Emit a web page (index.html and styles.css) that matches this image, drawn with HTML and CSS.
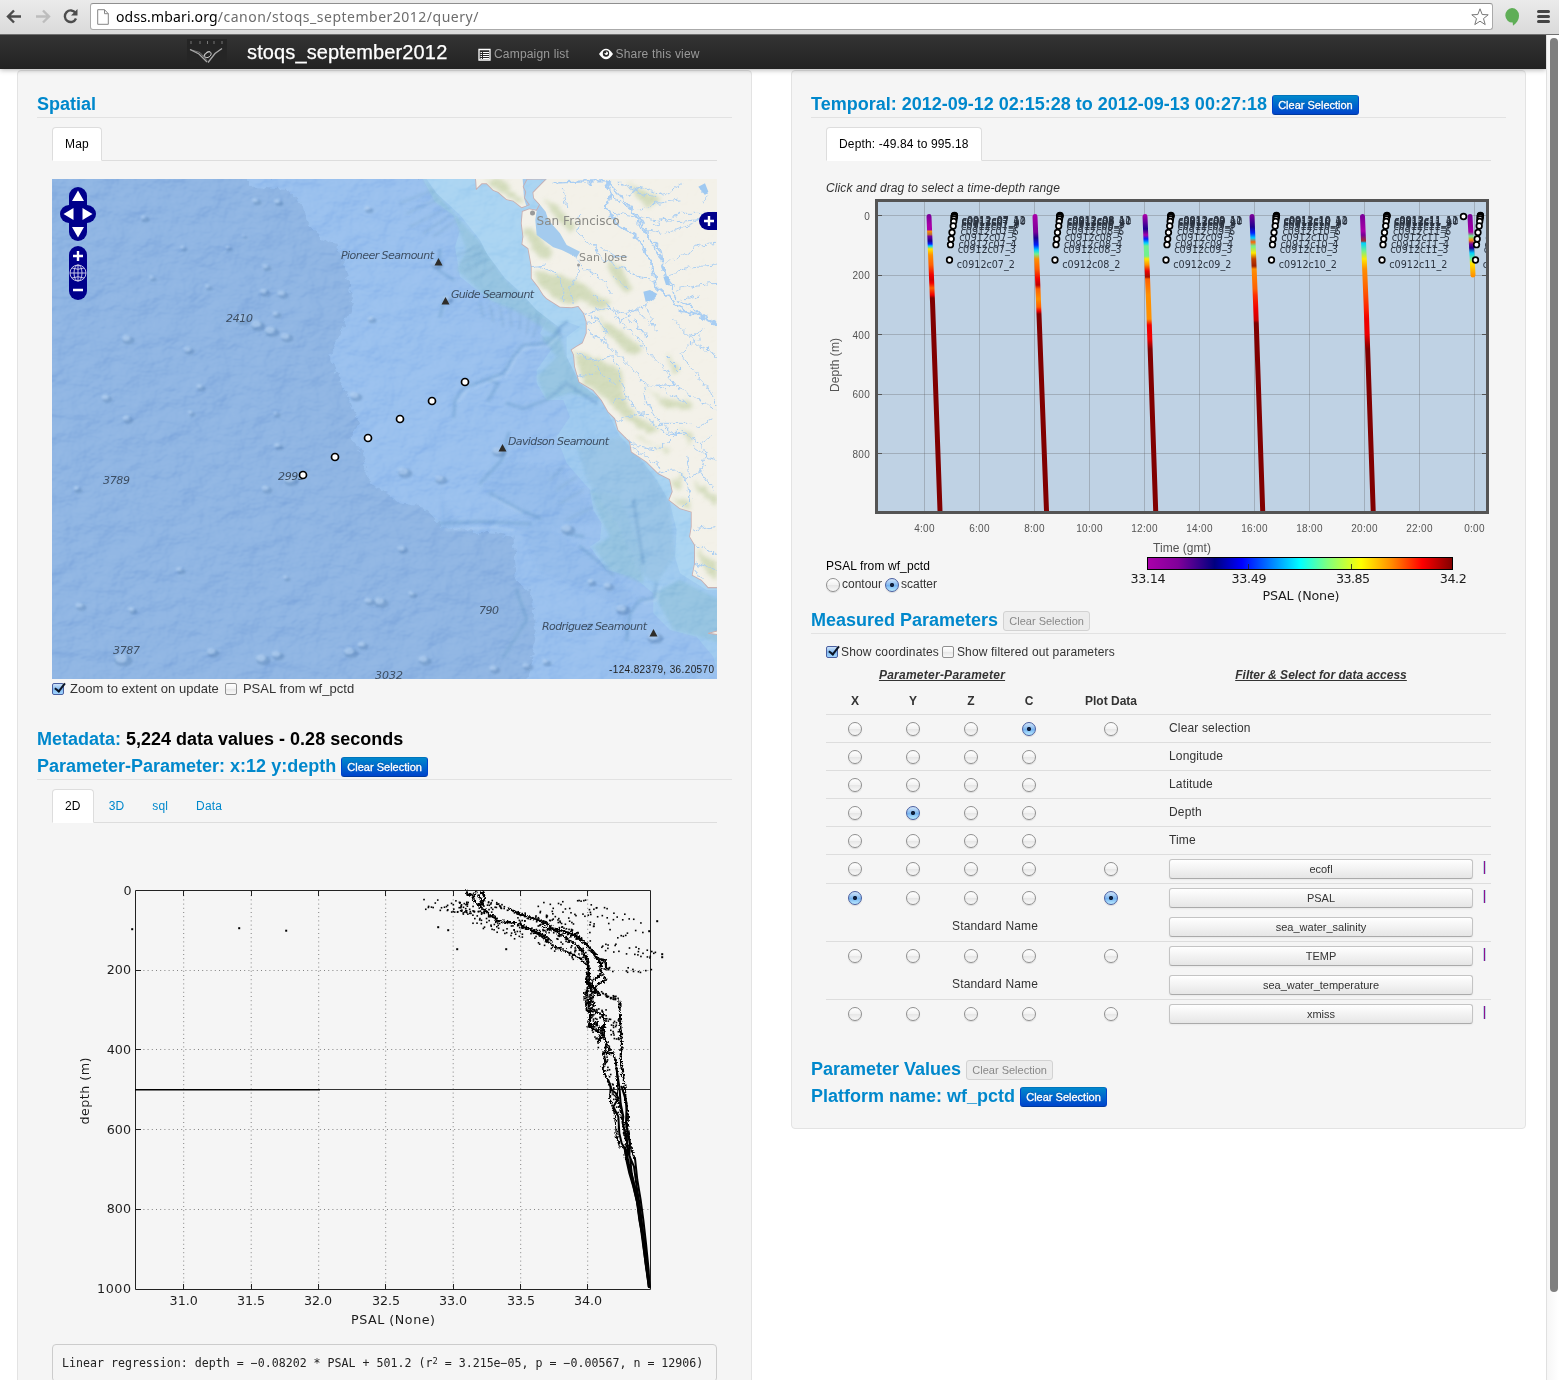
FILE: index.html
```html
<!DOCTYPE html>
<html lang="en">
<head>
<meta charset="utf-8">
<title>stoqs_september2012</title>
<link rel="stylesheet" href="styles.css">
</head>
<body>
<header class="chrome">
  <svg class="chrome-nav" width="90" height="34" viewBox="0 0 90 34">
    <g fill="none" stroke="#4c4c4c" stroke-width="2.4"><path d="M21 16.5H8.5M14 10.5l-6 6 6 6"/><path stroke="#bdbdbd" d="M36 16.5h12.500M43 10.500l6 6-6 6"/><path d="M75.500 13A5.800 5.800 0 1 0 76 18.500"/></g>
    <path fill="#4c4c4c" d="M77.500 9v6.500H71z"/>
  </svg>
  <div class="omnibox">
    <svg width="12" height="16" viewBox="0 0 12 16"><path d="M.7.7h6.800l3.800 4v10.600H.7z" fill="#fff" stroke="#858585"/><path d="M7.500.7v4h3.800" fill="none" stroke="#858585"/></svg>
    <div class="url"><b>odss.mbari.org</b><span>/canon/stoqs_september2012/query/</span></div>
    <svg class="star" width="20" height="20" viewBox="0 0 20 20"><path d="M10 1.800l2.200 5.700 6 .3-4.700 3.800 1.700 6L10 14.200l-5.200 3.400 1.700-6L1.800 7.800l6-.3z" fill="#fff" stroke="#777" stroke-linejoin="round"/></svg>
  </div>
  <svg class="chrome-ext" width="64" height="34" viewBox="0 0 64 34"><path fill="#5fae57" d="M19 8a7 7.500 0 0 1 7 7.500c0 5-3 8-6 10.200l-.3-3.200A7 7.200 0 0 1 19 8z"/><path stroke="#444" stroke-width="3" stroke-linecap="round" d="M45.500 11.500h10M45.500 16.500h10M45.500 21.500h10"/></svg>
</header>
<div class="viewport">
<div class="page">
  <nav class="navbar">
    <svg class="logo" width="40" height="25" viewBox="0 0 40 25"><rect width="40" height="25" fill="#252525"/><g fill="none" stroke="#a9a9a9"><path d="M4 2v3M13 2v3M20.500 2v3M27 2v3M35 2v3" stroke="#777"/><path d="M3 10.500l9 4.500 8 8M35 9.500l-7 5-7 9" stroke-width="1.300"/><path d="M3 10.500l10 3 7 8" stroke-width=".6"/><path d="M17 17c1-4 6-6 7-3s-4 6-6 4 3-6 5-5" stroke="#ccc"/></g></svg>
    <a class="brand">stoqs_september2012</a>
    <a class="navlink"><svg width="13" height="13" viewBox="0 0 13 13"><path d="M1 1.500h11v10.500H1z" fill="none" stroke="#fff" stroke-width="1.300"/><path d="M2.500 4.500h1.500M2.500 6.500h1.500M2.500 8.500h1.500M2.500 10.500h1.500M5 4.500h6M5 6.500h6M5 8.500h6M5 10.500h6" stroke="#fff"/></svg>Campaign list</a>
    <a class="navlink share"><svg width="14" height="12" viewBox="0 0 14 12"><path d="M0 6q7-10.500 14 0-7 10.500-14 0z" fill="#fff"/><circle cx="7" cy="5.500" r="3.200" fill="#292929"/><circle cx="7.300" cy="5.300" r="1.700" fill="#fff"/><circle cx="6.300" cy="4.300" r="1" fill="#292929"/></svg>Share this view</a>
  </nav>
  <main class="columns">
    <section class="well">
      <h3 class="first ruled">Spatial</h3>
      <div class="tabs"><a class="on">Map</a></div>
      <div class="body">
        <svg class="map" id="map" width="665" height="500" viewBox="0 0 665 500">
          <defs>
            <filter id="relief" x="0" y="0" width="1" height="1" color-interpolation-filters="sRGB"><feTurbulence type="fractalNoise" baseFrequency=".03 .04" numOctaves="4" seed="11"/><feDiffuseLighting surfaceScale="5" diffuseConstant=".6" lighting-color="#fff"><feDistantLight azimuth="225" elevation="58"/></feDiffuseLighting></filter>
            <filter id="ragged" x="-.1" y="-.1" width="1.2" height="1.2"><feTurbulence type="fractalNoise" baseFrequency=".05" numOctaves="3" seed="4"/><feDisplacementMap in="SourceGraphic" scale="26" xChannelSelector="R" yChannelSelector="G"/></filter>
            <filter id="soft"><feGaussianBlur stdDeviation="4"/></filter>
            <filter id="softer"><feTurbulence type="fractalNoise" baseFrequency=".06" numOctaves="3" seed="9"/><feDisplacementMap in="SourceGraphic" scale="26" xChannelSelector="R" yChannelSelector="G"/><feGaussianBlur stdDeviation="6"/></filter>
            <clipPath id="coast"><path id="coastline" d="M288 27L290 55 305 40 320 40 340 60 355 66 380 88 400 92 425 112 446 104 432 84 436 66 428 50 440 27 500 27 460 68 462 84 480 104 470 122 448 118 428 125 425 160 430 200 427 222 445 235 450 262 455 290 455 325 475 350 490 374 500 385 540 410 575 412 595 408 612 430 620 455 620 490 608 520 590 530 575 540 582 555 585 590 598 635 640 660 665 690 685 725 705 745 715 780 750 815 755 845 800 875 835 910 870 928 878 965 868 990 900 1015 935 1025 935 1070 930 1100 945 1125 945 1180 938 1215 965 1230 985 1252 1020 1252 1020 20z"/></clipPath>
          </defs>
          <rect width="665" height="500" fill="#8fb5e3"/>
          <g transform="translate(328 -9) scale(.33333)">
            <path fill="#99c0ee" filter="url(#ragged)" d="M-410 20L-380 50-280 60-230 110-220 150-185 200-130 220-105 290-80 400-150 560-110 650-60 760-90 800-50 850-35 940 20 965 60 1000 130 1010 190 1070 400 1100 410 1230 450 1270 470 1380 440 1560 1040 1560 1040 20z"/>
            <path fill="#8fb8e9" filter="url(#soft)" d="M180 970L260 1090 450 1050 300 960 380 870 550 900 630 1000 660 1060 520 1080 640 1160 760 1270 740 1400 700 1300 480 1210 420 1080 180 1080z" opacity=".45"/>
            <path fill="#9fcaef" d="M125 20L165 95 220 135 240 180 225 230 240 320 330 390 420 420 500 450 480 490 520 530 470 600 470 640 500 690 550 690 570 740 530 800 560 880 630 960 640 1020 665 1060 660 1110 630 1130 680 1200 760 1220 820 1270 820 1330 870 1380 950 1400 1000 1460 1020 1540 1020 20z"/>
            <path fill="#93c2dd" opacity=".75" filter="url(#soft)" d="M125 20L165 95 220 135 260 240 230 300 330 390 420 430 530 500 480 500 530 560 470 620 500 690 570 670 670 690 600 640 560 560 530 470 420 370 370 320 300 215 230 140 170 70z M630 960L650 1020 690 1100 640 1130 690 1200 790 1240 790 1160 720 980z M820 1270L900 1230 1020 1290 1020 1420 960 1400 880 1380z"/>
            <path fill="#aad4f2" d="M135 20L170 70 240 135 300 210 320 250 375 325 420 365 470 420 535 470 560 455 600 470 560 500 560 560 600 640 665 690 720 800 760 840 830 930 870 1000 890 1080 885 1160 900 1210 980 1260 1020 1260 1020 20z"/>
            <path fill="#97c3e4" opacity=".75" filter="url(#soft)" d="M590 830L720 800 760 840 830 930 870 1000 885 1160 830 1240 780 1210 710 1060 620 930z"/>
            <g fill="none" stroke-linejoin="round" stroke-linecap="round">
              <path stroke="#6d9fcd" stroke-width="8" opacity=".55" filter="url(#soft)" d="M540 480L500 520 430 525 400 560 370 610 330 625 250 655 225 690 222 740M325 630L355 640 325 690M560 455L530 480 545 500M650 700L560 640 500 690 430 715 380 700M385 790L365 870 300 940M330 970L420 1020 480 1045M180 1060L300 1055 450 1060M600 1130L650 1170 700 1215M830 1240L820 1285 780 1290 750 1330 740 1410M410 1260L440 1350 370 1460M560 1090L610 1100M180 240L175 300 220 330M195 380L180 440M760 990L790 1180"/>
              <path stroke="#6f9ec4" stroke-width="4" opacity=".5" filter="url(#soft)" d="M300 400L310 440M330 405L340 455M360 410L370 470M390 420L395 470M420 425L420 480M450 430L440 490M480 435L460 500M230 255L300 230M240 280L310 245M250 305L320 270M280 330L345 290M160 60L60 100M170 90L80 130M190 120L90 170M210 135L130 190M230 150L160 200M550 890L510 930M590 920L530 960M610 960L540 1000M640 1010L560 1050"/>
              <path stroke="#c7e1fa" stroke-width="4" opacity=".6" filter="url(#soft)" d="M548 490L505 530 435 535 408 565 378 618 335 633 258 662 233 700M338 984L425 1030M195 1080L350 1072 400 1082M840 1250L830 1290 790 1300"/>
            </g>
          </g>
          <g id="bumps"></g>
          <rect class="shade" width="665" height="500" filter="url(#relief)"/>
          <g transform="translate(328 -9) scale(.33333)">
            <use href="#coastline" fill="none" stroke="#c8aeb0" stroke-width="5"/>
            <g clip-path="url(#coast)">
              <rect x="200" y="0" width="820" height="1300" fill="#f3f1e9"/>
              <g fill="#c9d5ad" filter="url(#softer)" opacity=".75">
                <path d="M310 30L350 60 430 105 430 90 390 60 380 30zM430 180L455 175 520 250 500 270 460 240zM465 305L540 315 600 335 690 400 670 420 600 390 560 405 520 380 480 345zM680 270L720 290 755 350 740 370 700 330zM490 80L540 120 590 170 570 190 520 130zM580 545L640 560 720 600 725 650 740 700 770 740 840 780 800 790 720 730 660 670 610 640zM650 440L720 480 790 540 760 560 690 500zM790 650L860 690 940 700 930 720 860 710z"/>
                <path d="M760 790L830 830 870 840 860 850 780 810zM880 930L910 910 900 960 880 950zM880 980L930 990 930 1020 900 1010zM940 930L1010 980 1010 1010 950 960zM950 1140L1011 1180 1011 1240 970 1190zM740 40L790 60 850 90 800 110zM860 550L900 600 880 610zM900 770L940 800 930 820z"/>
              </g>
              <rect class="shade land" x="200" y="0" width="820" height="1300" filter="url(#relief)"/>
              <path fill="#a4cbee" d="M428 27L500 27 456 68 460 84 480 104 497 125 505 150 540 190 560 225 600 245 590 262 545 240 520 232 470 195 466 150 470 122 440 112 432 84z"/>
              <g fill="none" stroke="#a9cef3" stroke-width="3" stroke-linejoin="round" stroke-linecap="round" filter="url(#ragged)">
                <path stroke-width="6.500" d="M520 38L620 34 680 34 690 70 680 110 710 160 740 180 780 210 800 250 820 300 830 350 870 385 910 425 960 435 1011 465"/>
                <path stroke-width="4.500" d="M690 70L740 110 770 130 820 220 850 290 865 340 890 385 920 405 1011 460M680 34L715 70 760 125 790 180 840 240 850 310M800 365L830 375 810 395M860 320L880 350"/>
                <path d="M700 130L790 145 890 155 950 150 1011 140M820 165L900 130 1011 130M800 180L860 190 960 150M850 280L920 250 960 225 1011 220M870 310L940 290 1011 285M890 360L950 345 1011 340M740 75L790 50 850 75 905 40M780 120L830 100 900 90M960 50L980 80 970 100M720 40L780 70 830 80M900 390L960 375M740 300L780 320 830 340M830 375L790 410 740 430 700 420M700 320L740 350M590 180L640 230 670 270 740 300M570 245L620 300 680 340 695 370M600 285L590 320 570 360 580 400M480 290L530 310 550 350 545 400M455 290L500 285M660 230L700 260 740 260M550 60L560 110M600 130L590 180 650 240"/>
                <path d="M620 460L660 455 680 480 670 510 640 500 625 480M660 455L620 430 690 410 640 370M670 510L700 540 760 600 790 640M690 410L720 460 760 490 800 540 850 590 880 640 920 670 1011 720M720 460L770 420 830 480M800 400L820 470M585 550L640 570 660 610 700 640M590 620L640 610M700 565L740 680 700 700M640 570L700 560M740 430L800 500M790 640L840 650 900 690 920 700M790 640L800 700 840 760 890 800M690 760L740 740 800 730M740 680L790 740 860 790 920 790M840 760L930 760M940 600L980 650 1011 700M960 500L900 550 940 600M930 500L970 480M880 450L960 530 1011 560M950 770L990 750M880 640L830 650M860 560L900 600"/>
                <path d="M720 790L770 830 830 840 870 810 900 780M750 830L800 860 840 890M835 910L880 900 920 930 960 900 980 860 940 830M920 930L930 990 910 1010M920 860L930 920M980 860L1011 870M960 900L1000 960M940 1080L1011 1070M945 1125L990 1140 1011 1160M940 1180L1011 1200M945 1200L980 1250M990 800L960 820 980 860M905 780L960 820"/>
              </g>
              <g fill="#9fc9f1"><path d="M790 365l20 -5 22 12-15 18-20 5zM955 50l20 -10 10 25-10 10zM850 320l15 0 5 25-12 0z"/></g>
            </g>
            <path d="M985 1390l30-8v12z" fill="#f3f1e9" stroke="#c8aeb0" stroke-width="3"/>
          </g>
          <circle cx="480.500" cy="34" r="2.500" fill="#999"/><circle cx="526.500" cy="86" r="1.500" fill="#999"/>
          <g class="places">
            <text x="484.500" y="45.500" textLength="83" font-size="12">San Francisco</text>
            <text x="527" y="82" textLength="48" font-size="11">San Jose</text>
          </g>
          <g class="depths">
            <text x="289" y="80" textLength="93">Pioneer Seamount</text><text x="399" y="119" textLength="83">Guide Seamount</text>
            <text x="456" y="266" textLength="101">Davidson Seamount</text><text x="490" y="451" textLength="105">Rodriguez Seamount</text>
            <text x="174" y="143" textLength="27">2410</text><text x="51" y="305" textLength="27">3789</text><text x="226" y="301" textLength="27">2993</text>
            <text x="61" y="475" textLength="27">3787</text><text x="427" y="435" textLength="20">790</text><text x="323" y="500" textLength="28">3032</text>
          </g>
          <path fill="#2e2c28" d="M386.500 79l4 7.500h-8zM393.500 118l4 7.500h-8zM450.500 265l4 7.500h-8zM601.500 450l4 7.500h-8z"/>
          <g class="stations"><circle cx="413" cy="203" r="3.500"/><circle cx="380" cy="222" r="3.500"/><circle cx="348" cy="240" r="3.500"/><circle cx="316" cy="259" r="3.500"/><circle cx="283" cy="278" r="3.500"/><circle cx="251" cy="296" r="3.500"/></g>
          <g fill="#00008b"><rect x="17" y="8" width="18" height="54" rx="9"/><rect x="8" y="26" width="36" height="18" rx="9"/><rect x="17" y="67" width="18" height="54" rx="9"/><path d="M665 33h-9a9 9 0 0 0 0 18h9z"/></g>
          <path fill="#fff" d="M26 11.500l6 10.500H20zM26 58.500l6-10.500H20zM11.500 35l10-6v12zM40.500 35l-10-6v12z"/>
          <path stroke="#fff" stroke-width="2.400" d="M21 77h10M26 72v10M21 111h10M652 42h10M657 37v10"/>
          <g fill="none" stroke="#d6d6ee" stroke-width=".9"><circle cx="26" cy="94" r="8"/><ellipse cx="26" cy="94" rx="4" ry="8"/><path d="M26 86v16M18 94h16M20 89q6 2.500 12 0M20 99q6-2.500 12 0"/></g>
          <text class="coords" x="557" y="494" textLength="105">-124.82379, 36.20570</text>
        </svg>
        <div class="checks"><input type="checkbox" checked><span>Zoom to extent on update</span><input type="checkbox" class="gap"><span>PSAL from wf_pctd</span></div>
      </div>
      <h3 class="meta">Metadata:&nbsp;<em>5,224 data values - 0.28 seconds</em></h3>
      <h3 class="ruled">Parameter-Parameter: x:12 y:depth<button class="mini blue">Clear Selection</button></h3>
      <div class="tabs"><a class="on">2D</a><a>3D</a><a>sql</a><a>Data</a></div>
      <div class="body">
        <svg class="plot" width="665" height="521" viewBox="0 0 665 521">
          <defs><filter id="noisy" x="-.1" y="-.1" width="1.2" height="1.2"><feTurbulence type="fractalNoise" baseFrequency=".16" numOctaves="2" seed="3"/><feDisplacementMap in="SourceGraphic" scale="15" xChannelSelector="R" yChannelSelector="G"/></filter></defs>
          <g class="dotted"><path d="M131.700 68V466M199.200 68V466M266.700 68V466M333.700 68V466M401.200 68V466M468.700 68V466M535.700 68V466M83 147.500H598M83 226.500H598M83 306.500H598M83 386.500H598"/></g>
          <path class="axis" d="M83.500 67.500H598.500V466.500H83.500zM131.500 68v5M199.500 68v5M266.500 68v5M333.500 68v5M401.500 68v5M468.500 68v5M535.500 68v5M131.500 466v-5M199.500 466v-5M266.500 466v-5M333.500 466v-5M401.500 466v-5M468.500 466v-5M535.500 466v-5M84 147.500h5M84 226.500h5M84 306.500h5M84 386.500h5"/>
          <path d="M83 266.500H598" stroke="#333"/><path d="M83 266.800H268" stroke="#000" stroke-width="1.600"/>
          <g class="profiles" transform="translate(318 47) scale(.33333)">
            <g filter="url(#noisy)">
            <path d="M290 64L292 75 302 72 310 85 318 64M312 90L325 105 335 90 325 74 340 66 345 85 330 110 350 125 360 140 370 135 380 152 440 160 470 172 510 195 545 225 600 250 630 265 645 280M520 170L560 185 590 205 620 225 640 245 652 280 655 300 650 320 658 350 645 370 650 420 665 435 660 450 655 470 675 478 690 490"/>
            <path d="M415 115L450 132 480 142 520 155 550 175 600 190 640 215 660 235 680 265 705 270 710 300M455 170L500 185 530 200 545 215"/>
            <path d="M540 175L585 185 620 195 650 220 675 250 690 280 692 300 690 315 670 330 665 350 680 360 660 375 665 395 675 400 660 420 700 435 705 460 700 490 705 510 720 535 710 550 730 550 738 580 742 620 745 660 738 680 748 700 757 750 765 790 770 830M700 270L690 300 708 330 680 345 672 365 690 375M655 280L650 340 665 345 650 360 660 430M640 250L655 270 660 350 670 380 655 400 662 432"/>
            <path d="M748 392L750 440 752 480 756 520 752 555 754 590 760 620 765 660 768 700 774 740 772 780 782 830 795 870M700 490L710 520 702 550 706 580 698 595 712 630 722 650 720 690 732 720 738 760 740 800 750 830 765 835 768 870M660 435L660 472 680 455 685 480 700 470 685 515 700 500"/>
            </g>
            <path d="M795 865L802 930 812 990 820 1050 828 1120 836 1200 838 1250M768 865L778 910 790 950 802 1000 812 1070 820 1130 830 1200 838 1250"/>
            <path d="M740 600L748 650 752 700 760 740 758 760 770 800 775 850 792 890 800 950 810 1010 818 1080 828 1150 838 1250M715 630L725 660 738 670 745 685 730 710 745 740 748 790 755 820 780 860 785 910 798 970 808 1050 822 1120 836 1250M755 650L770 700 768 760 780 820 778 860"/>
            <path d="M765 835L775 880 790 940 806 1010 818 1090 828 1180 838 1250" stroke-width="9"/>
          </g>
          <g id="scatter"></g>
          <g class="mpl" text-anchor="end"><text x="79.500" y="72">0</text><text x="79" y="151">200</text><text x="79" y="231">400</text><text x="79" y="311">600</text><text x="79" y="390">800</text><text x="79" y="470" textLength="34">1000</text></g>
          <g class="mpl" text-anchor="middle"><text x="131.700" y="482">31.0</text><text x="199" y="482">31.5</text><text x="266" y="482">32.0</text><text x="334" y="482">32.5</text><text x="401" y="482">33.0</text><text x="469" y="482">33.5</text><text x="536" y="482">34.0</text><text x="341" y="501" textLength="84">PSAL (None)</text><text transform="translate(37 268) rotate(-90)" textLength="67">depth (m)</text></g>
        </svg>
        <pre>Linear regression: depth = −0.08202 * PSAL + 501.2 (r<sup>2</sup> = 3.215e−05, p = −0.00567, n = 12906)</pre>
      </div>
    </section>
    <section class="well right">
      <h3 class="first ruled">Temporal: 2012-09-12 02:15:28 to 2012-09-13 00:27:18<button class="mini blue">Clear Selection</button></h3>
      <div class="tabs"><a class="on">Depth: -49.84 to 995.18</a></div>
      <div class="body">
        <div class="hint">Click and drag to select a time-depth range</div>
        <svg class="timeplot" width="665" height="357" viewBox="0 0 665 357">
          <defs><clipPath id="frame"><rect x="50" y="0" width="610" height="312.500"/></clipPath></defs>
          <rect x="50.500" y="1.500" width="611" height="312" fill="#bfd2e4"/>
          <path class="grid" d="M98.500 3V312M153.500 3V312M208.500 3V312M263.500 3V312M318.500 3V312M373.500 3V312M428.500 3V312M483.500 3V312M538.500 3V312M593.500 3V312M648.500 3V312M51 16.500H661M51 76.500H661M51 135.500H661M51 195.500H661M51 254.500H661"/>
          <path d="M52 16.500h4M52 76.500h4M52 135.500h4M52 195.500h4M52 254.500h4M656 76.500h5M656 135.500h5M656 195.500h5M656 254.500h5" stroke="#555"/>
          <g id="casts" clip-path="url(#frame)"></g>
          <rect x="50.500" y="1.500" width="611" height="312" fill="none" stroke="#545454" stroke-width="3"/>
          <g class="flot" text-anchor="end"><text x="44" y="21">0</text><text x="44" y="80">200</text><text x="44" y="140">400</text><text x="44" y="199">600</text><text x="44" y="259">800</text></g>
          <g class="flot" text-anchor="middle"><text x="98.500" y="333">4:00</text><text x="153.500" y="333">6:00</text><text x="208.500" y="333">8:00</text><text x="263.500" y="333">10:00</text><text x="318.500" y="333">12:00</text><text x="373.500" y="333">14:00</text><text x="428.500" y="333">16:00</text><text x="483.500" y="333">18:00</text><text x="538.500" y="333">20:00</text><text x="593.500" y="333">22:00</text><text x="648.500" y="333">0:00</text><text class="axname" x="356" y="353" textLength="58">Time (gmt)</text><text class="axname" transform="translate(13 166) rotate(-90)" textLength="54">Depth (m)</text></g>
        </svg>
        <div class="legend">
          <div class="modes"><div>PSAL from wf_pctd</div><div class="radios"><input type="radio" name="mode"><span>contour</span><input type="radio" name="mode" checked><span>scatter</span></div></div>
          <svg width="365" height="51" viewBox="0 0 365 51">
            <defs><linearGradient id="jet"><stop offset="0" stop-color="#a0a"/><stop offset=".1" stop-color="#80009a"/><stop offset=".22" stop-color="#000080"/><stop offset=".31" stop-color="#00f"/><stop offset=".5" stop-color="#0ff"/><stop offset=".59" stop-color="#7fff7f"/><stop offset=".7" stop-color="#ff0"/><stop offset=".8" stop-color="#ff8c00"/><stop offset=".9" stop-color="#f00"/><stop offset="1" stop-color="#800000"/></linearGradient></defs>
            <rect x="22.500" y="1.500" width="305" height="12" fill="url(#jet)" stroke="#000"/><path d="M123.500 13v-5M226.500 13v-5" stroke="#222" stroke-width=".8"/>
            <g class="mpl" text-anchor="middle"><text x="23" y="27.300" textLength="35">33.14</text><text x="124" y="27.300" textLength="35">33.49</text><text x="228" y="27.300" textLength="34">33.85</text><text x="328.300" y="27.300" textLength="27">34.2</text><text x="176" y="44.300" textLength="77">PSAL (None)</text></g>
          </svg>
        </div>
      </div>
      <h3 class="ruled">Measured Parameters<button class="mini off">Clear Selection</button></h3>
      <div class="body params">
        <div class="checks tight"><input type="checkbox" checked><span>Show coordinates</span><input type="checkbox" class="gap"><span>Show filtered out parameters</span></div>
        <div class="row group"><u class="span4">Parameter-Parameter</u><i></i><u>Filter &amp; Select for data access</u></div>
        <div class="row head"><b>X</b><b>Y</b><b>Z</b><b>C</b><b>Plot Data</b></div>
        <div class="row"><input type="radio" name="x"><input type="radio" name="y"><input type="radio" name="z"><input type="radio" name="c" checked><input type="radio" name="p"><label>Clear selection</label></div>
        <div class="row"><input type="radio" name="x"><input type="radio" name="y"><input type="radio" name="z"><input type="radio" name="c"><i></i><label>Longitude</label></div>
        <div class="row"><input type="radio" name="x"><input type="radio" name="y"><input type="radio" name="z"><input type="radio" name="c"><i></i><label>Latitude</label></div>
        <div class="row"><input type="radio" name="x"><input type="radio" name="y" checked><input type="radio" name="z"><input type="radio" name="c"><i></i><label>Depth</label></div>
        <div class="row"><input type="radio" name="x"><input type="radio" name="y"><input type="radio" name="z"><input type="radio" name="c"><i></i><label>Time</label></div>
        <div class="row data"><input type="radio" name="x"><input type="radio" name="y"><input type="radio" name="z"><input type="radio" name="c"><input type="radio" name="p"><button>ecofl</button><s></s></div>
        <div class="row data"><input type="radio" name="x" checked><input type="radio" name="y"><input type="radio" name="z"><input type="radio" name="c"><input type="radio" name="p" checked><button>PSAL</button><s></s></div>
        <div class="row data std"><span>Standard Name</span><button>sea_water_salinity</button></div>
        <div class="row data"><input type="radio" name="x"><input type="radio" name="y"><input type="radio" name="z"><input type="radio" name="c"><input type="radio" name="p"><button>TEMP</button><s></s></div>
        <div class="row data std"><span>Standard Name</span><button>sea_water_temperature</button></div>
        <div class="row data"><input type="radio" name="x"><input type="radio" name="y"><input type="radio" name="z"><input type="radio" name="c"><input type="radio" name="p"><button>xmiss</button><s></s></div>
      </div>
      <h3 class="values">Parameter Values<button class="mini off">Clear Selection</button></h3>
      <h3>Platform name: wf_pctd<button class="mini blue">Clear Selection</button></h3>
    </section>
  </main>
</div>
<div class="scrollbar"><div class="thumb"></div></div>
</div>
<script src="charts.js"></script>
</body>
</html>
```
FILE: styles.css
```css
* { box-sizing: border-box; }
body { margin: 0; height: 1380px; overflow: hidden; background: #fff; color: #333; font: 12px/18px "Liberation Sans", Arial, sans-serif; letter-spacing: .1px; }
svg { display: block; flex: none; letter-spacing: 0; }
.chrome { display: flex; height: 35px; background: linear-gradient(#ebebeb, #dadada); border-bottom: 1px solid #6f6f6f; }
.omnibox { display: flex; align-items: center; width: 1403px; height: 27px; margin-top: 3px; padding: 0 2px 0 6px; background: #fff; border: 1px solid #aaa; border-top-color: #8f8f8f; border-radius: 3px; }
.url { flex: 1; margin-left: 7px; font: 14px/20px "Noto Sans", sans-serif; color: #6d6d6d; white-space: nowrap; }
.url b { color: #000; font-weight: 400; letter-spacing: .15px; }
.url span { letter-spacing: .5px; }
.viewport { display: flex; height: 1345px; }
.page { width: 1546px; overflow: hidden; }
.scrollbar { width: 13px; padding: 3px 1px 0 3px; border-left: 1px solid #e0e0e0; background: linear-gradient(90deg, #f6f6f6, #fff); }
.thumb { width: 8px; height: 1254px; border-radius: 4px; background: #7f7f7f; }
.navbar { position: relative; display: flex; align-items: center; height: 34px; padding-left: 187px; background: linear-gradient(#333, #222); box-shadow: 0 1px 5px rgba(0,0,0,.3); }
.logo { margin-bottom: 1px; }
.brand { width: 231px; margin-left: 20px; color: #fff; font-size: 20px; line-height: 34px; margin-top: -1px; white-space: nowrap; letter-spacing: .13px; -webkit-text-stroke: .25px #fff; }
.navlink { display: flex; align-items: center; gap: 3px; color: #999; padding-top: 4px; letter-spacing: .18px; }
.share { margin-left: 29.500px; gap: 3px; }
.columns { display: flex; gap: 40px; align-items: flex-start; padding: 1px 0 0 17px; }
.well { width: 735px; height: 1330px; padding: 0 19px; background: #f5f5f5; border: 1px solid #e3e3e3; border-radius: 4px; }
.well.right { width: 735px; height: 1059px; margin-left: -1px; }
h3 { display: flex; align-items: center; height: 27px; margin: 0; font-size: 18px; line-height: 27px; letter-spacing: 0; color: #08c; white-space: nowrap; }
h3 em { font-style: normal; color: #000; }
h3.ruled { border-bottom: 1px solid #e2e2e2; }
h3.first { height: 47px; padding-top: 20px; }
h3.meta { margin-top: 27px; }
h3.values { margin-top: 28px; }
.mini { height: 20px; width: 87px; margin: 1px 0 0 5px; padding: 0; border: 1px solid #bbb; border-radius: 3px; font: 11px/16px "Liberation Sans", Arial, sans-serif; white-space: nowrap; }
.mini.blue { color: #fff; background: linear-gradient(#0088cc, #0044cc); border-color: #0074bc #0044cc #003a9e; text-shadow: 0 -1px 0 rgba(0,0,0,.25); -webkit-text-stroke: .3px #fff; }
.mini.off { color: #888; background: #ececec; border-color: #d2d2d2; }
.tabs { display: flex; height: 34px; margin: 9px 15px 0; border-bottom: 1px solid #ddd; }
.tabs a { height: 34px; margin-right: 2px; padding: 8px 12px; border: 1px solid transparent; line-height: 17px; color: #08c; letter-spacing: .15px; }
.tabs a.on { background: #fff; color: #000; border-color: #ddd #ddd #fff; border-radius: 4px 4px 0 0; }
.body { padding: 0 15px; }
.map { margin-top: 18px; overflow: hidden; }
.shade { mix-blend-mode: soft-light; opacity: .45; }
.shade.land { opacity: .3; }
.depths { font: italic 11px "DejaVu Sans", sans-serif; fill: #3d4e62; }
.places { font-family: "DejaVu Sans", sans-serif; fill: #8a8a86; }
.coords { font: 10px "Liberation Sans", sans-serif; fill: #222; }
.stations circle, .bottle { fill: #fff; stroke: #000; stroke-width: 1.7; }
.checks { display: flex; align-items: center; height: 20px; }
.checks span { margin-left: 6px; font-size: 13px; letter-spacing: .03px; }
.checks.tight span { margin-left: 3px; font-size: 12px; letter-spacing: .16px; }
.checks .gap { margin-left: 6px; }
.checks.tight .gap { margin-left: 3px; }
input { appearance: none; flex: none; margin: 0; border: 1px solid #909090; background: linear-gradient(#fff, #f2f2f2 50%, #e6e6e6 51%, #f8f8f8); }
input[type=radio] { width: 14px; height: 14px; border-radius: 50%; box-shadow: 0 1px 1px rgba(0,0,0,.12); }
input[type=radio]:checked { border-color: #4a5fa0; background: radial-gradient(circle, #10203c 0 1.8px, transparent 2.4px), linear-gradient(#cfe4fa, #84b9ef 50%, #72b0f0 51%, #b9eaff); }
input[type=checkbox] { position: relative; width: 12px; height: 12px; border-radius: 2px; }
input[type=checkbox]:checked { border-color: #4a5fa0; background: linear-gradient(#cfe4fa, #84b9ef 50%, #9fd5ff); }
input[type=checkbox]:checked::after { content: ""; position: absolute; left: 4px; top: -3px; width: 4px; height: 9px; border: solid #0a1526; border-width: 0 2px 2px 0; transform: rotate(38deg); }
pre { height: 38px; margin: 0; padding: 9px; border: 1px solid #ccc; border-radius: 4px; font: 11.620px/18px "DejaVu Sans Mono", monospace; letter-spacing: 0; color: #222; white-space: pre; }
pre sup { font-size: 75%; line-height: 0; vertical-align: baseline; position: relative; top: -.4em; }
.dotted { fill: none; stroke: #777; stroke-width: .9; stroke-dasharray: 1 3.200; }
.axis { fill: none; stroke: #222; }
.profiles { fill: none; stroke: #000; stroke-width: 6; stroke-linejoin: round; stroke-linecap: round; }
.mpl { font: 12.700px "DejaVu Sans", sans-serif; fill: #1c1c1c; }
.hint { height: 38px; padding-top: 18px; font-style: italic; letter-spacing: .12px; }
.timeplot { overflow: hidden; }
.grid { fill: none; stroke: #545454; stroke-opacity: .28; }
.flot { font: 10px "Liberation Sans", sans-serif; letter-spacing: .3px; fill: #545454; }
.flot .axname { font-size: 12px; letter-spacing: 0; }
.casttag { font: 9.600px "DejaVu Sans", sans-serif; fill: #2c3440; }
.legend { display: flex; justify-content: space-between; height: 51px; padding-right: 1px; color: #000; }
.modes { padding-top: 1px; }
.radios { display: flex; align-items: center; color: #333; gap: 2px; height: 19px; letter-spacing: 0; }
.radios span { margin-right: 1px; margin-top: -1px; }
.params { padding-top: 8px; }
.row { display: grid; grid-template-columns: 58px 58px 58px 58px 106px 314px 13px; align-items: center; justify-items: center; height: 28px; border-top: 1px solid #ddd; }
.row.group { height: 26px; border: 0; font-weight: 700; font-style: italic; letter-spacing: .15px; }
.row.group u:last-child { letter-spacing: .03px; }
.row .span4 { grid-column: span 4; letter-spacing: .25px; }
.row.head { height: 26px; border: 0; letter-spacing: 0; }
.row label { justify-self: start; margin-left: 5px; position: relative; top: -1px; letter-spacing: .15px; }
.row input { margin-top: 1px; }
.row.data { height: 29px; }
.row.data input { margin-top: -1px; }
.row.std { border: 0; }
.row.std span { grid-column: 1 / 6; margin-top: -2px; letter-spacing: .15px; }
.row button { width: 304px; height: 20px; padding: 0; border: 1px solid #c4c4c4; border-bottom-color: #aaa; border-radius: 3px; background: linear-gradient(#fff, #e6e6e6); box-shadow: 0 1px 2px rgba(0,0,0,.05); font: 11px/16px "Liberation Sans", sans-serif; color: #333; }
.row s { width: 3px; height: 13px; margin: -3px 0 0; border-right: 1px solid #bfd2e4; border-left: 1px solid #bfd2e4; background: #90108c; }
```
FILE: charts.js
```js
const NS = 'http://www.w3.org/2000/svg';
function add(parent, tag, attrs, text) {
  const node = document.createElementNS(NS, tag);
  for (const key in attrs) node.setAttribute(key, attrs[key]);
  if (text) node.textContent = text;
  parent.appendChild(node);
  return node;
}
let seed = 20120912;
function rnd() {
  seed = (seed * 1664525 + 1013904223) % 4294967296;
  return seed / 4294967296;
}

// Casts: [name, x at surface, x at lowest sample, last y, bottle x, colour stops by y]
const P = '#a800a8', V = '#7a0098', N = '#1c0090', B = '#0020ff', C = '#00d0ff', G = '#70f090', Y = '#ffe800', O = '#ff9000', D = '#ff6000', R = '#f00000', K = '#800000';
const casts = [
  ['c0912c07', 103, 114, 312, 128.5, [[16, V], [26, P], [31, P], [32, O], [36, '#b06040'], [37, V], [42, N], [45, B], [47, C], [50, Y], [56, O], [66, D], [76, R], [81, '#d00000'], [84, R], [89, D], [96, R], [99, K]]],
  ['c0912c08', 209, 220.500, 312, 234, [[16, P], [33, V], [39, N], [46, B], [51, C], [55, G], [60, O], [70, D], [80, R], [86, '#c00000'], [90, D], [100, O], [108, D], [112, R], [115, K]]],
  ['c0912c09', 319, 329.700, 312, 345, [[16, P], [30, N], [36, P], [40, B], [44, C], [47, G], [57, G], [60, Y], [66, O], [72, R], [78, '#a01000'], [80, D], [96, O], [120, O], [126, R], [140, R], [150, K]]],
  ['c0912c10', 426, 436.700, 312, 450.5, [[16, V], [28, N], [34, B], [39, C], [43, D], [47, G], [54, Y], [60, '#c04000'], [67, '#a02000'], [70, O], [90, D], [96, '#ff3000'], [110, R], [121, '#d00000'], [124, K]]],
  ['c0912c11', 536.500, 547.200, 312, 561, [[16, V], [32, P], [36, V], [42, '#a03030'], [44, C], [52, G], [60, Y], [70, O], [90, D], [110, '#ff2000'], [120, R], [135, R], [150, K]]],
  ['c0912c12', 644, 647, 76, 654.5, [[17, V], [33, P], [37, G], [41, O], [45, V], [49, N], [54, C], [60, G], [64, Y], [70, '#ffc000'], [77, O]]]
];
const plot = document.getElementById('casts');
const drops = [[0, 16.3], [-.1, 16.7], [-.2, 17.3], [-.3, 18.2], [-.5, 20], [-.8, 22.5], [-1.3, 27], [-2.5, 33.5], [-3.3, 40], [-4, 45.7], [-5, 61]];
casts.forEach((cast, index) => {
  const [name, x1, x2, end, bottleX, stops] = cast;
  const gradient = add(plot, 'linearGradient', { id: 'cast' + index, gradientUnits: 'userSpaceOnUse', x1: 0, x2: 0, y1: 0, y2: 312 });
  stops.forEach(([y, color]) => add(gradient, 'stop', { offset: y / 312, 'stop-color': color }));
  const middle = end > 100 ? `L${x1 + 3.600} 105 ` : '';
  add(plot, 'path', { d: `M${x1} 17.500${middle}L${x2} ${end}`, fill: 'none', stroke: `url(#cast${index})`, 'stroke-width': 5, 'stroke-linecap': 'round' });
  drops.forEach(([dx, y], k) => {
    const number = 12 - k;
    add(plot, 'text', { class: 'casttag', x: bottleX + dx + 7.3, y: y + (number === 2 ? 8 : 8.7) }, `${name}_${number}`);
  });
  drops.forEach(([dx, y]) => add(plot, 'circle', { class: 'bottle', cx: bottleX + dx, cy: y, r: 2.8 }));
});
add(plot, 'circle', { class: 'bottle', cx: 637.5, cy: 17.500, r: 2.9 });

// Loose samples around the profile curves
const scatter = document.getElementById('scatter');
function dot(x, y, s) {
  add(scatter, 'rect', { x: x - .8, y: y - .8, width: s || 1.6, height: s || 1.6 });
}
function cloud(count, x1, y1, x2, y2, spread) {
  for (let i = 0; i < count; i++) {
    const t = rnd();
    dot(x1 + (x2 - x1) * t + (rnd() - .5) * spread * .5, y1 + (y2 - y1) * t + (rnd() - .5) * spread);
  }
}
cloud(34, 370, 81, 425, 85, 12);
cloud(55, 408, 86, 442, 84, 14);
cloud(60, 418, 92, 470, 108, 18);
cloud(40, 440, 80, 495, 100, 5);
cloud(60, 462, 100, 530, 130, 20);
cloud(50, 485, 95, 540, 125, 18);
cloud(65, 487, 95, 550, 92, 34);
cloud(22, 540, 90, 588, 112, 26);
cloud(26, 545, 122, 608, 132, 10);
cloud(14, 552, 146, 604, 148, 5);
cloud(38, 542, 168, 566, 176, 4);
cloud(40, 548, 190, 568, 212, 18);
cloud(60, 536, 147, 545, 225, 10);
cloud(24, 552, 225, 566, 290, 6);
[[80, 106], [187, 105], [234, 107.500], [386, 104], [396, 107], [405, 126], [454, 126], [610, 131], [610, 134], [605, 98], [597, 108]].forEach(([x, y]) => dot(x, y, 2));

// Small seafloor features
const bumps = document.getElementById('bumps');
const hills = [[92, 39, 4], [131, 69, 3], [176, 69, 3], [192, 57, 2], [214, 88, 4], [156, 108, 3], [100, 99, 3], [212, 113, 5], [230, 115, 5], [224, 135, 4], [190, 140, 7], [205, 146, 7], [219, 152, 7], [234, 158, 6], [136, 171, 5], [75, 160, 6], [148, 208, 4], [54, 219, 5], [75, 240, 5], [139, 234, 3], [224, 235, 3], [204, 22, 4], [226, 23, 4], [316, 30, 4], [319, 140, 4], [303, 217, 6], [226, 267, 4], [238, 301, 7], [214, 310, 5], [128, 391, 4], [234, 399, 3], [328, 423, 7], [317, 422, 5], [28, 427, 5], [80, 431, 4], [25, 310, 4], [360, 415, 4], [352, 293, 7], [388, 300, 6], [350, 370, 5], [372, 481, 6], [160, 473, 6], [210, 480, 7], [225, 476, 6], [298, 473, 7], [310, 466, 5], [475, 487, 5], [494, 483, 4], [556, 407, 5], [539, 403, 4], [570, 430, 7], [535, 445, 4], [602, 458, 8], [515, 350, 7], [384, 85, 6], [395, 120, 5], [70, 480, 9], [442, 490, 5], [446, 272, 7]];
hills.forEach(([x, y, r]) => {
  add(bumps, 'ellipse', { cx: x + 1.5, cy: y + 1.5, rx: r, ry: r * .65, fill: '#648dbd', opacity: .55, filter: 'url(#hill)' });
  add(bumps, 'ellipse', { cx: x - 1, cy: y - 1, rx: r * .7, ry: r * .5, fill: '#b5d3f4', opacity: .7, filter: 'url(#hill)' });
});
const hillFilter = add(bumps, 'filter', { id: 'hill', x: -1, y: -1, width: 3, height: 3 });
add(hillFilter, 'feGaussianBlur', { stdDeviation: 1.1 });
```
